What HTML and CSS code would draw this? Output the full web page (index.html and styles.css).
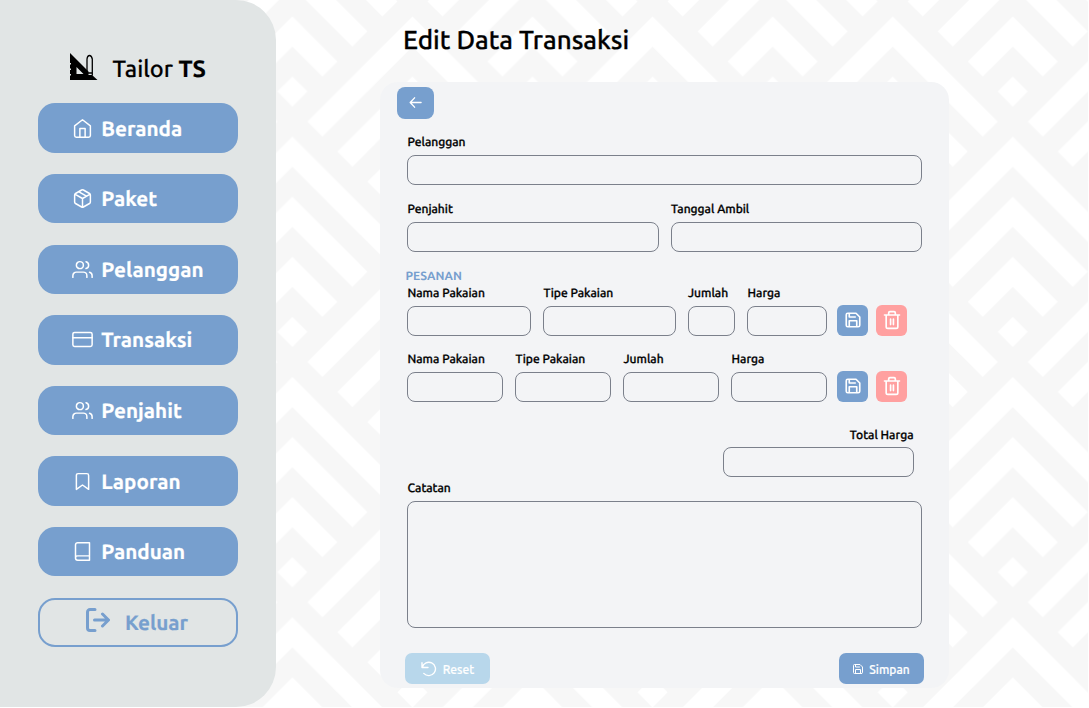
FILE: index.html
```html
<!DOCTYPE html>
<html lang="id">
<head>
<meta charset="utf-8">
<title>Tailor TS - Edit Data Transaksi</title>
<link rel="stylesheet" href="styles.css">
</head>
<body>
<svg class="defs" width="0" height="0" aria-hidden="true">
  <symbol id="users" viewBox="0 0 24 24"><path d="M17 21v-2a4 4 0 0 0-4-4H5a4 4 0 0 0-4 4v2M23 21v-2a4 4 0 0 0-3-3.87M16 3.13a4 4 0 0 1 0 7.75"/><circle cx="9" cy="7" r="4"/></symbol>
  <symbol id="save" viewBox="0 0 24 24"><path d="M19 21H5a2 2 0 0 1-2-2V5a2 2 0 0 1 2-2h11l5 5v11a2 2 0 0 1-2 2zM17 21v-8H7v8M7 3v5h8"/></symbol>
  <symbol id="trash" viewBox="0 0 24 24"><path d="M3 6h18M5 6v14a2 2 0 0 0 2 2h10a2 2 0 0 0 2-2V6M8 6V3.500a1.500 1.500 0 0 1 1.500-1.500h5A1.500 1.500 0 0 1 16 3.500V6M10.300 11v6.500M13.700 11v6.500"/></symbol>
</svg>
<div class="app">
  <svg class="backdrop" aria-hidden="true">
    <defs>
      <g id="peak" fill="#fff">
        <path d="M0 0L105 105L90 120L0 30L-90 120L-105 105Z"/>
        <path d="M0 60L75 135L60 150L0 90L-60 150L-75 135Z"/>
        <path d="M0 120L45 165L30 180L0 150L-30 180L-45 165Z"/>
        <path d="M0 180L15 195L0 210L-15 195Z"/>
      </g>
      <pattern id="peaks" width="240" height="240" patternUnits="userSpaceOnUse" patternTransform="translate(292.4 136.600) scale(1.0005 1.0014)">
        <use href="#peak"/><use href="#peak" x="240"/><use href="#peak" x="120" y="120"/><use href="#peak" x="120" y="-120"/>
      </pattern>
    </defs>
    <rect width="100%" height="100%" fill="#f7f7f7"/>
    <rect width="100%" height="100%" fill="url(#peaks)"/>
  </svg>
  <aside class="sidebar">
    <div class="brand">
      <svg class="logo" viewBox="0 0 28 28"><path fill-rule="evenodd" d="M0 0L18.500 18.500V22H22L27.500 27H0V22.500H1V21H0V17H1V15.500H0V11.500H1V10H0ZM6.500 14V21H13.500Z"/><path d="M17 22V6Q17.500 2.500 19.500 2.500T22.300 6V22M17 20h5" fill="none" stroke="#000" stroke-width="1.300"/></svg>
      <span class="name">Tailor <b>TS</b></span>
    </div>
    <nav class="nav">
      <a class="item"><svg class="icon" viewBox="0 0 24 24"><path d="M3 9l9-7 9 7v11a2 2 0 0 1-2 2H5a2 2 0 0 1-2-2zM9 22V12h6v10"/></svg><span>Beranda</span></a>
      <a class="item"><svg class="icon" viewBox="0 0 24 24"><path d="M16.500 9.400L7.500 4.210M21 16V8a2 2 0 0 0-1-1.730l-7-4a2 2 0 0 0-2 0l-7 4A2 2 0 0 0 3 8v8a2 2 0 0 0 1 1.730l7 4a2 2 0 0 0 2 0l7-4A2 2 0 0 0 21 16zM3.270 6.960L12 12.010l8.730-5.050M12 22.080V12"/></svg><span>Paket</span></a>
      <a class="item"><svg class="icon"><use href="#users"/></svg><span>Pelanggan</span></a>
      <a class="item"><svg class="icon" viewBox="0 0 24 24"><rect x="1" y="4" width="22" height="16" rx="2"/><path d="M1 10h22"/></svg><span>Transaksi</span></a>
      <a class="item"><svg class="icon"><use href="#users"/></svg><span>Penjahit</span></a>
      <a class="item"><svg class="icon" viewBox="0 0 24 24"><path d="M19 21l-7-5-7 5V5a2 2 0 0 1 2-2h10a2 2 0 0 1 2 2z"/></svg><span>Laporan</span></a>
      <a class="item"><svg class="icon" viewBox="0 0 24 24"><path d="M4 19.500A2.500 2.500 0 0 1 6.500 17H20M6.500 2H20v20H6.500A2.500 2.500 0 0 1 4 19.500v-15A2.500 2.500 0 0 1 6.500 2z"/></svg><span>Panduan</span></a>
      <a class="item logout"><svg class="exit" viewBox="0 0 24 24"><path d="M9 1.500H4a2.500 2.500 0 0 0-2.500 2.500v16A2.500 2.500 0 0 0 4 22.500h5M8.500 12H22M16.500 6l6 6-6 6"/></svg><span>Keluar</span></a>
    </nav>
  </aside>
  <main class="main">
    <h1 class="title">Edit Data Transaksi</h1>
    <form class="card">
      <button type="button" class="back" aria-label="Kembali"><svg viewBox="0 0 14 14"><path d="M13 7H1.500M6 2L1.300 7L6 12"/></svg></button>
      <div class="fields">
        <label class="field"><span>Pelanggan</span><input></label>
      </div>
      <div class="fields halves">
        <label class="field"><span>Penjahit</span><input></label>
        <label class="field"><span>Tanggal Ambil</span><input></label>
      </div>
      <h2 class="section">PESANAN</h2>
      <div class="order">
        <div class="order-fields fitted">
          <label class="field"><span>Nama Pakaian</span><input></label>
          <label class="field"><span>Tipe Pakaian</span><input></label>
          <label class="field"><span>Jumlah</span><input></label>
          <label class="field"><span>Harga</span><input></label>
        </div>
        <button type="button" class="square" aria-label="Simpan"><svg class="save"><use href="#save"/></svg></button>
        <button type="button" class="square danger" aria-label="Hapus"><svg class="trash"><use href="#trash"/></svg></button>
      </div>
      <div class="order">
        <div class="order-fields">
          <label class="field"><span>Nama Pakaian</span><input></label>
          <label class="field"><span>Tipe Pakaian</span><input></label>
          <label class="field"><span>Jumlah</span><input></label>
          <label class="field"><span>Harga</span><input></label>
        </div>
        <button type="button" class="square" aria-label="Simpan"><svg class="save"><use href="#save"/></svg></button>
        <button type="button" class="square danger" aria-label="Hapus"><svg class="trash"><use href="#trash"/></svg></button>
      </div>
      <label class="field total"><span>Total Harga</span><input></label>
      <label class="field notes"><span>Catatan</span><textarea></textarea></label>
      <div class="actions">
        <button type="button" class="action reset"><svg viewBox="0 0 16 16"><path d="M1 1.800V6.500H7M1.300 6.200A6.700 6.700 0 1 1 2.800 12.400"/></svg><span>Reset</span></button>
        <button type="button" class="action submit"><svg><use href="#save"/></svg><span>Simpan</span></button>
      </div>
    </form>
  </main>
</div>
</body>
</html>
```
FILE: styles.css
```css
* { box-sizing: border-box; }
body { margin: 0; background: #fff; color: #000; font-family: Ubuntu, "Noto Sans", sans-serif; text-rendering: geometricPrecision; overflow: hidden; }
button, input, textarea { font: inherit; margin: 0; }
button { border: 0; padding: 0; color: #fff; background: #779fce; display: flex; align-items: center; justify-content: center; }
svg { flex: none; fill: none; stroke: currentColor; stroke-linecap: round; stroke-linejoin: round; }
.defs { display: none; }
.app { position: relative; display: flex; width: 1088px; height: 707px; }
.backdrop { position: absolute; inset: 0; width: 100%; height: 100%; z-index: -1; stroke: none; }

.sidebar { width: 276px; height: 707px; flex: none; background: #e1e5e5; border-radius: 0 40px 40px 0; padding: 53px 38px 0; }
.brand { display: flex; height: 50.400px; padding-left: 32px; }
.logo { width: 28px; height: 28px; fill: #000; stroke: none; }
.name { margin-left: 14.500px; font-size: 23.500px; line-height: 33px; font-weight: 500; white-space: nowrap; -webkit-text-stroke: .2px; }
.name b { font-weight: 700; }
.nav { display: grid; gap: 21.100px; }
.item { display: flex; align-items: center; height: 49.500px; padding-left: 33.800px; gap: 8.500px; border-radius: 17px; background: #779fce; color: #fff; font-size: 20.700px; font-weight: 700; line-height: 28px; -webkit-text-stroke: .2px; }
.item span { padding-top: 1px; }
.icon { width: 21px; height: 21px; stroke-width: 1.700; }
.logout { background: transparent; border: 2px solid #779fce; color: #779fce; padding-left: 46px; gap: 15px; }
.exit { width: 24px; height: 24px; stroke-width: 3; margin-top: -4px; }

.main { padding-left: 104px; }
.title { margin: 0; padding: 23px 0 0 23px; height: 82.400px; font-size: 26px; line-height: 34px; font-weight: 500; white-space: nowrap; -webkit-text-stroke: .3px; }
.card { width: 569px; height: 605.500px; border-radius: 18px; background: #f3f4f6; padding: 4.200px 27px 0; }
.back { width: 36.500px; height: 32.500px; border-radius: 8px; margin-left: -10px; }
.back svg { width: 13px; height: 13px; stroke-width: 1.500; }
.fields { margin-top: 14.400px; display: grid; gap: 12px; }
.halves { grid-template-columns: 1fr 1fr; }
.field { display: grid; grid-template-rows: 18px 30px; row-gap: 3.900px; min-width: 0; }
.field span { font-size: 12.050px; line-height: 20px; font-weight: 500; padding-left: .5px; white-space: nowrap; -webkit-text-stroke: .3px; }
.field input, .field textarea { display: block; width: 100%; height: 100%; border: 1px solid #7b808b; border-radius: 8px; background: transparent; resize: none; padding: 0 8px; outline: 0; }
.section { margin: 15px 0 0 -1.500px; height: 17.400px; font-size: 12px; line-height: 20px; font-weight: 700; color: #779fce; }
.order { display: flex; align-items: flex-end; }
.order + .order { margin-top: 14.100px; }
.order-fields { width: 420px; margin-right: 10px; display: grid; gap: 12px; grid-template-columns: repeat(4, 1fr); }
.fitted { grid-template-columns: 124px 132.500px 47.500px 80px; }
.square { width: 31px; height: 31px; border-radius: 6px; }
.danger { margin-left: 8.300px; background: #ffa0a0; }
.save { width: 18px; height: 18px; stroke-width: 2.200; }
.trash { width: 20px; height: 20px; stroke-width: 2; }
.total { width: 190.500px; margin: 23.600px 8.500px 0 auto; }
.total span { text-align: right; }
.notes { grid-template-rows: 18px 127px; margin-top: 2px; }
.actions { display: flex; justify-content: space-between; margin: 25px -1.500px 0 -2px; }
.action { width: 85px; height: 31px; border-radius: 7px; font-size: 12px; font-weight: 500; gap: 6px; -webkit-text-stroke: .2px; }
.action span { padding-top: 1px; }
.action svg { width: 12px; height: 12px; stroke-width: 2; }
.action.submit { gap: 5px; }
.reset { background: #b8d7eb; }
.action.reset svg { width: 16px; height: 16px; stroke-width: 1.400; }
```
